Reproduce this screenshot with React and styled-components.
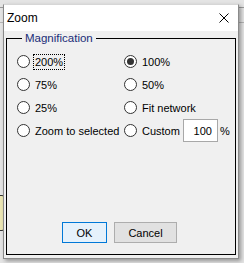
import React, { useState } from 'react'
import styled, { createGlobalStyle } from 'styled-components'

const GlobalStyle = createGlobalStyle`
    html, body { margin: 0; padding: 0; }
    body {
        font-family: "Liberation Sans", Arial, sans-serif;
        font-size: 11px;
        color: #000;
    }
`

const options = [
    { id: '200', label: '200%' },
    { id: '100', label: '100%' },
    { id: '75', label: '75%' },
    { id: '50', label: '50%' },
    { id: '25', label: '25%' },
    { id: 'fit', label: 'Fit network' },
    { id: 'sel', label: 'Zoom to selected' },
    { id: 'custom', label: 'Custom' },
]

const App = () => {
    const [selected, setSelected] = useState('100')
    const [custom, setCustom] = useState('100')

    return (
        <Page>
            <GlobalStyle />
            <Node />
            <Window>
                <TitleBar>
                    <Title>Zoom</Title>
                    <CloseButton type='button' aria-label='Close'>
                        <svg width="10" height="10" viewBox="0 0 10 10">
                            <path d="M0.5 0.5 L9.5 9.5 M9.5 0.5 L0.5 9.5" stroke="#000" strokeWidth="1" fill="none" />
                        </svg>
                    </CloseButton>
                </TitleBar>
                <Body>
                    <Group>
                        <Legend>Magnification</Legend>
                        <Grid>
                            {options.map(opt => (
                                <Option key={opt.id} onClick={() => setSelected(opt.id)}>
                                    <Radio $checked={selected === opt.id} />
                                    <Label $focus={opt.id === '200'}>{opt.label}</Label>
                                    {opt.id === 'custom' && (
                                        <>
                                            <Input value={custom} onChange={e => setCustom(e.target.value)} />
                                            <Percent>%</Percent>
                                        </>
                                    )}
                                </Option>
                            ))}
                        </Grid>
                        <Buttons>
                            <Button type='button' $primary>OK</Button>
                            <Button type='button' $wide>Cancel</Button>
                        </Buttons>
                    </Group>
                </Body>
            </Window>
        </Page>
    )
}

export default App

const Page = styled.div`
    position: relative;
    width: 244px;
    height: 263px;
    box-sizing: border-box;
    padding: 4px 0 0 3px;
    overflow: hidden;
    background:
        linear-gradient(#9a9a9a, #9a9a9a) 0 7px / 100% 1px no-repeat,
        linear-gradient(#b4b4b4, #b4b4b4) 0 22px / 100% 1px no-repeat,
        #e4e4e4;
`

const Node = styled.div`
    position: absolute;
    left: -8px;
    top: 195px;
    width: 11px;
    height: 34px;
    background: #ece6b4;
    border: 1px solid #333;
    border-radius: 3px;
`

const Window = styled.div`
    position: relative;
    width: 236px;
    height: 255px;
    box-sizing: border-box;
    border: 1px solid #8a8a8a;
    border-top-color: #d6d6d6;
    background: #f0f0f0;
    display: flex;
    flex-direction: column;
    box-shadow: 2px 2px 4px rgba(0, 0, 0, 0.35);
`

const TitleBar = styled.div`
    height: 26px;
    flex: none;
    background: #fff;
    display: flex;
    align-items: center;
    justify-content: space-between;
    padding-left: 3px;
`

const Title = styled.span`
    font-size: 12px;
    line-height: 16px;
`

const CloseButton = styled.button`
    width: 28px;
    height: 26px;
    border: none;
    background: transparent;
    padding: 0;
    display: flex;
    align-items: center;
    justify-content: center;
`

const Body = styled.div`
    flex: 1;
    display: flex;
    padding: 0 2px 3px 2px;
`

const Group = styled.fieldset`
    flex: 1;
    margin: 0;
    border: 1px solid #000;
    padding: 5px 0 11px 10px;
    display: flex;
    flex-direction: column;
    min-width: 0;
`

const Legend = styled.legend`
    margin-left: 5px;
    padding: 0 3px;
    line-height: 14px;
    font-size: 11.5px;
    color: #1a2d78;
`

const Grid = styled.div`
    display: grid;
    grid-template-columns: 107px 1fr;
    grid-auto-rows: 23px;
`

const Option = styled.div`
    display: flex;
    align-items: center;
    white-space: nowrap;
`

const Radio = styled.span`
    width: 13px;
    height: 13px;
    box-sizing: border-box;
    border: 1px solid #333;
    border-radius: 50%;
    background: #fff;
    margin-right: 4px;
    flex: none;
    display: flex;
    align-items: center;
    justify-content: center;
    &::after {
        content: '';
        width: 7px;
        height: 7px;
        border-radius: 50%;
        background: #333;
        display: ${p => (p.$checked ? 'block' : 'none')};
    }
`

const Label = styled.span`
    line-height: 14px;
    padding: 0 1px;
    outline: ${p => (p.$focus ? '1px dotted #000' : 'none')};
`

const Input = styled.input`
    width: 35px;
    height: 23px;
    box-sizing: border-box;
    margin-left: 2px;
    border: 1px solid #a8a8a8;
    background: #fff;
    font: inherit;
    text-align: right;
    padding: 0 5px 0 0;
    outline: none;
`

const Percent = styled.span`
    margin-left: 2px;
`

const Buttons = styled.div`
    margin-top: auto;
    display: flex;
    gap: 7px;
    padding-left: 45px;
`

const Button = styled.button`
    width: ${p => (p.$wide ? '63px' : '45px')};
    height: 21px;
    box-sizing: border-box;
    font: inherit;
    color: #000;
    padding: 0;
    border: 1px solid ${p => (p.$primary ? '#0078d7' : '#adadad')};
    background: ${p => (p.$primary ? '#e5f1fb' : '#e1e1e1')};
`
